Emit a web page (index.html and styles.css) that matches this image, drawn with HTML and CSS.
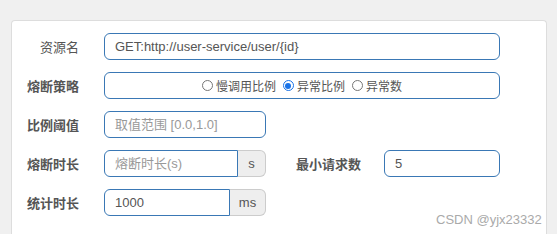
FILE: index.html
```html
<!DOCTYPE html>
<html lang="zh">
<head>
    <meta charset="UTF-8">
    <title>熔断规则</title>
    <link rel="stylesheet" href="styles.css">
</head>
<body>
    <div class="panel">
        <!-- 资源名 -->
        <div class="row">
            <label class="label label-light">资源名</label>
            <input class="input wide" type="text" value="GET:http://user-service/user/{id}">
        </div>

        <!-- 熔断策略 -->
        <div class="row">
            <label class="label">熔断策略</label>
            <div class="input wide radios">
                <span class="radio"><i class="dot"></i>慢调用比例</span>
                <span class="radio"><i class="dot checked"></i>异常比例</span>
                <span class="radio"><i class="dot"></i>异常数</span>
            </div>
        </div>

        <!-- 比例阈值 -->
        <div class="row">
            <label class="label">比例阈值</label>
            <input class="input narrow" type="text" placeholder="取值范围 [0.0,1.0]">
        </div>

        <!-- 熔断时长 + 最小请求数 -->
        <div class="row">
            <label class="label">熔断时长</label>
            <div class="group">
                <input class="input grouped sec" type="text" placeholder="熔断时长(s)">
                <span class="addon addon-s">s</span>
            </div>
            <label class="label label-second">最小请求数</label>
            <input class="input small" type="text" value="5">
        </div>

        <!-- 统计时长 -->
        <div class="row">
            <label class="label">统计时长</label>
            <div class="group">
                <input class="input grouped ms" type="text" value="1000">
                <span class="addon addon-ms">ms</span>
            </div>
        </div>
    </div>

    <div class="watermark">CSDN @yjx23332</div>
</body>
</html>
```

FILE: styles.css
```css
* {
    margin: 0;
    padding: 0;
    box-sizing: border-box;
}

body {
    background: #f0f0f0;
    font-family: "Liberation Sans", "Noto Sans CJK SC", sans-serif;
    font-size: 13px;
    color: #555;
    width: 557px;
    height: 234px;
    overflow: hidden;
    position: relative;
}

.panel {
    margin: 20px 0 0 11px;
    width: 536px;
    height: 214px;
    background: #fff;
    border: 1px solid #ddd;
    border-bottom: none;
    border-radius: 4px 4px 0 0;
    padding-top: 12px;
}

.row {
    display: flex;
    align-items: center;
    height: 27px;
    margin-bottom: 12px;
}

.row:last-child {
    margin-bottom: 0;
}

.label {
    width: 67px;
    margin-right: 25px;
    text-align: right;
    font-weight: bold;
    color: #555;
    white-space: nowrap;
}

.label-light {
    font-weight: normal;
}

.label-second {
    width: 95px;
    margin-right: 23px;
}

.input {
    height: 27px;
    border: 1px solid #3a78b5;
    border-radius: 6px;
    padding: 0 10px;
    font-family: inherit;
    font-size: 13px;
    color: #555;
    background: #fff;
    outline: none;
}

.input::placeholder {
    color: #999;
}

.wide {
    width: 396px;
}

.narrow {
    width: 162px;
}

.small {
    width: 116px;
}

.radios {
    display: flex;
    justify-content: center;
    align-items: center;
    gap: 7px;
    font-size: 12px;
}

.radio {
    display: flex;
    align-items: center;
}

.dot {
    width: 11px;
    height: 11px;
    border: 1px solid #767676;
    border-radius: 50%;
    margin-right: 3px;
    position: relative;
}

.dot.checked {
    border-color: #1a73e8;
}

.dot.checked::after {
    content: "";
    position: absolute;
    left: 1.5px;
    top: 1.5px;
    width: 6px;
    height: 6px;
    border-radius: 50%;
    background: #1a73e8;
}

.group {
    display: flex;
}

.grouped {
    border-radius: 6px 0 0 6px;
}

.sec {
    width: 134px;
}

.ms {
    width: 126px;
}

.addon {
    height: 27px;
    display: flex;
    align-items: center;
    justify-content: center;
    background: #eee;
    border: 1px solid #ccc;
    border-left: none;
    border-radius: 0 6px 6px 0;
    color: #555;
}

.addon-s {
    width: 28px;
}

.addon-ms {
    width: 36px;
}

.watermark {
    position: absolute;
    left: 436px;
    top: 212px;
    font-size: 13px;
    color: #aaa;
}
```
